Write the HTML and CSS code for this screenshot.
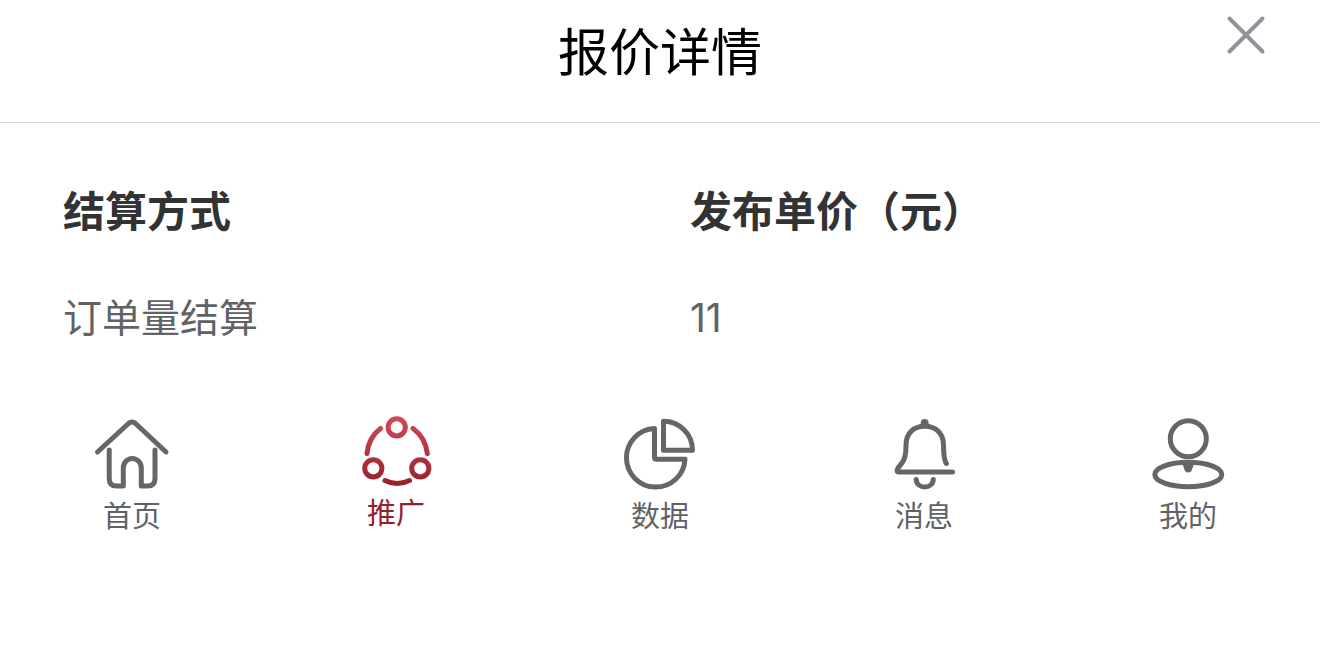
FILE: index.html
```html
<!DOCTYPE html>
<html lang="zh-CN">
<head>
  <meta charset="UTF-8" />
  <meta name="viewport" content="width=device-width, initial-scale=1" />
  <title>报价详情</title>
  <link rel="stylesheet" href="styles.css">
</head>
<body>

  <header class="header">
    <h1 class="title">报价详情</h1>
    <button type="button" class="close" aria-label="关闭">
      <svg viewBox="0 0 40 40" width="40" height="40">
        <path d="M3.5 3.5 36.5 36.5M36.5 3.5 3.5 36.5" />
      </svg>
    </button>
  </header>

  <main class="content">
    <table class="price-table">
      <thead>
        <tr>
          <th scope="col">结算方式</th>
          <th scope="col">发布单价（元）</th>
        </tr>
      </thead>
      <tbody>
        <tr>
          <td>订单量结算</td>
          <td>11</td>
        </tr>
      </tbody>
    </table>
  </main>

  <!-- Tab bar -->
  <nav class="tabbar">
    <a class="tab" href="#home">
      <svg class="tab-icon" viewBox="0 0 80 80" width="80" height="80">
        <path d="M5.5 38 36.5 9.5Q40 6.5 43.5 9.5L74 38" />
        <path d="M17.2 36V64.5Q17.2 72 24.5 72H31.3V54A9 9.5 0 0 1 49.3 54V72H55.5Q63 72 63 64.5V36" />
      </svg>
      <span>首页</span>
    </a>
    <a class="tab active" href="#promote">
      <svg class="tab-icon" viewBox="0 0 80 77" width="80" height="77">
        <defs>
          <linearGradient id="red" gradientUnits="userSpaceOnUse" x1="0" y1="2" x2="0" y2="72">
            <stop offset="0" stop-color="#d14b59" />
            <stop offset="1" stop-color="#96202a" />
          </linearGradient>
        </defs>
        <circle cx="40.7" cy="13.3" r="8.6" />
        <circle cx="17.3" cy="54.3" r="8.6" />
        <circle cx="64.3" cy="54.3" r="8.6" />
        <path d="M24.5 14.5Q12.5 23.5 11 39.5M57 14.5Q69.5 23.5 71.3 39.5M29 66.5Q41 72.5 53.5 66.5" />
      </svg>
      <span>推广</span>
    </a>
    <a class="tab" href="#data">
      <svg class="tab-icon" viewBox="0 0 80 80" width="80" height="80">
        <path d="M34.5 14.5A29.3 29.3 0 1 0 65 45.3H36.5Q34.5 45.3 34.5 43.3Z" />
        <path d="M43.5 7.3A29 29 0 0 1 72.5 36.3H43.5Z" />
      </svg>
      <span>数据</span>
    </a>
    <a class="tab" href="#message">
      <svg class="tab-icon" viewBox="0 0 80 80" width="80" height="80">
        <circle class="solid" cx="40.7" cy="9" r="4" />
        <path d="M62.3 49.5Q59.5 45 59.5 31C59.5 19 51.5 12.3 40.7 12.3S22 19 22 31C22 44 20 47 14 54Q11.5 58 15 58H68.5" />
        <path d="M32.2 65.5C33 75.5 48.5 75.5 49.3 65.5" />
      </svg>
      <span>消息</span>
    </a>
    <a class="tab" href="#mine">
      <svg class="tab-icon" viewBox="0 0 80 80" width="80" height="80">
        <circle cx="40.3" cy="24.7" r="18" />
        <ellipse cx="40.3" cy="60.5" rx="33.5" ry="12.3" />
        <path class="solid" d="M34.5 50H46L43.5 57Q40.3 60 37 57Z" />
      </svg>
      <span>我的</span>
    </a>
  </nav>

</body>
</html>
```
FILE: styles.css
```css
body {
  margin: 0;
  background: #fff;
  color: #606266;
  font-family: Inter, "Noto Sans CJK SC", sans-serif;
}

.header {
  display: grid;
  grid-template-columns: 1fr auto 1fr;
  align-items: start;
  padding: 15px 54px 31px;
  border-bottom: 1px solid #d4d4d4;
}

.title {
  grid-column: 2;
  margin: 0;
  color: #000;
  font-size: 51px;
  font-weight: 400;
  line-height: 76px;
}

.close {
  justify-self: end;
  padding: 0;
  border: none;
  background: none;
  cursor: pointer;
}

.close svg {
  display: block;
  fill: none;
  stroke: #909399;
  stroke-width: 4;
  stroke-linecap: round;
}

.content {
  padding: 36px 33px 43px;
}

.price-table {
  width: 100%;
  table-layout: fixed;
  border-collapse: collapse;
}

.price-table th,
.price-table td {
  padding: 22px 30px;
  text-align: left;
}

.price-table th {
  color: #333;
  font-size: 42px;
  font-weight: 700;
  line-height: 62px;
}

.price-table td {
  font-size: 39px;
  line-height: 62px;
}

.tabbar {
  display: flex;
}

.tab {
  display: flex;
  flex: 1;
  flex-direction: column;
  align-items: center;
  gap: 2px;
  color: #606266;
  font-size: 29px;
  line-height: 42px;
  text-decoration: none;
}

.tab-icon {
  fill: none;
  stroke: #666;
  stroke-width: 5;
  stroke-linecap: round;
  stroke-linejoin: round;
}

.tab-icon .solid {
  fill: #666;
  stroke: none;
}

.tab.active {
  color: #96202a;
}

.tab.active .tab-icon {
  stroke: url(#red);
}
```
